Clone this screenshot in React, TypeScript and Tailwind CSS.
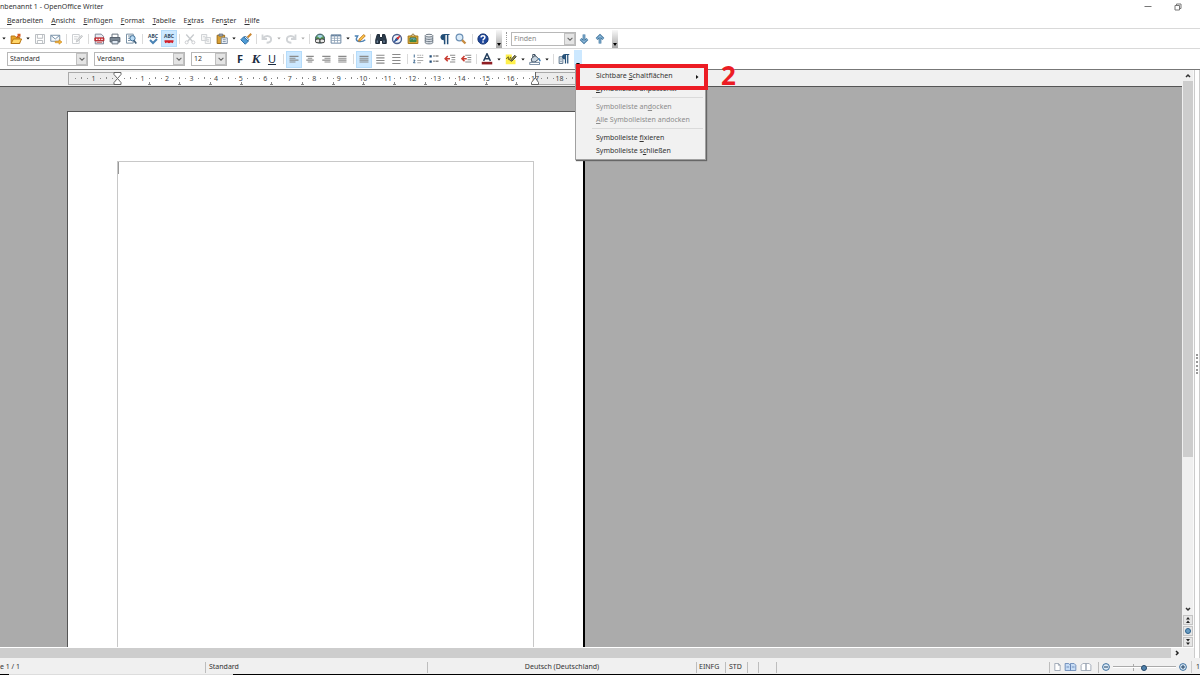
import React from 'react';

interface IconProps {
  children: React.ReactNode;
}

const Icon: React.FC<IconProps> = ({ children }) => (
  <svg viewBox="0 0 16 16" className="w-3 h-3" fill="none" stroke="#444" strokeWidth="1.3" aria-hidden="true">
    {children}
  </svg>
);

interface ToolProps {
  label: string;
  active?: boolean;
  children: React.ReactNode;
}

const Tool: React.FC<ToolProps> = ({ label, active, children }) => (
  <button
    type="button"
    aria-label={label}
    className={
      active
        ? 'flex h-[17px] w-4 shrink-0 items-center justify-center border border-[#b5dcfb] bg-[#cce8ff]'
        : 'flex h-4 w-4 shrink-0 items-center justify-center'
    }
  >
    {children}
  </button>
);

const Arrow = ({ dim }: { dim?: boolean }) => (
  <button type="button" aria-label="Mehr" className="flex h-4 w-2 shrink-0 items-center justify-center">
    <svg viewBox="0 0 4 3" className="h-[3px] w-1" fill={dim ? '#aaa' : '#111'}>
      <path d="M0.300 0.500h3.400L2 2.500z" />
    </svg>
  </button>
);

const Sep = ({ wide }: { wide?: boolean }) => (
  <span className={wide ? 'flex w-[6px] shrink-0 justify-center' : 'flex w-[5px] shrink-0 justify-center'}>
    <span className="h-[10px] w-px bg-[#dadada]" />
  </span>
);

const Chevron = () => (
  <svg viewBox="0 0 10 10" className="h-2 w-2" fill="none" stroke="#666" strokeWidth="1.3">
    <path d="M2 3.5l3 3 3-3" />
  </svg>
);

const Overflow = () => (
  <button
    type="button"
    aria-label="Weitere Schaltflächen"
    className="flex h-[18px] w-[6px] shrink-0 items-end justify-center bg-linear-to-b from-[#f8f8f8] to-[#a8a8a8] pb-[2px]"
  >
    <svg viewBox="0 0 4 3" className="h-[3px] w-1" fill="#000">
      <path d="M0 0h4L2 3z" />
    </svg>
  </button>
);

interface ComboProps {
  label: string;
  value: string;
  width: string;
}

const Combo: React.FC<ComboProps> = ({ label, value, width }) => (
  <label className={`relative flex h-[14px] shrink-0 border border-[#b8b8b8] bg-white ${width}`}>
    <select aria-label={label} className="w-full appearance-none bg-transparent pl-[2px] leading-3 outline-none">
      <option>{value}</option>
    </select>
    <span className="pointer-events-none absolute inset-y-0 right-0 flex w-[11px] items-center justify-center border border-[#c0c0c0] bg-[#e4e4e4]">
      <Chevron />
    </span>
  </label>
);

const Undo = ({ flip }: { flip?: boolean }) => (
  <Icon>
    <path
      d={flip ? 'M14 2v6H8M13.500 7.500C10 2 2 3.500 2.500 9c.5 3 3 4 6 4' : 'M2 2v6h6M2.500 7.500C6 2 14 3.500 13.500 9c-.5 3-3 4-6 4'}
      stroke="#d0d3d6"
      strokeWidth="2.400"
    />
  </Icon>
);

const Lines = ({ d, color = '#8a8a8a' }: { d: string; color?: string }) => (
  <Icon>
    <path d={d} stroke={color} strokeWidth="1.4" />
  </Icon>
);

const SpellCheck = ({ auto }: { auto?: boolean }) => (
  <svg viewBox="0 0 14 14" className="h-[14px] w-[14px]" aria-hidden="true">
    <text x="7" y="6" textAnchor="middle" fontSize="5" fontWeight="700" fill="#34495e">ABC</text>
    {auto ? (
      <path d="M2.500 9h9M3 10.500l2-1 2 1 2-1 2 1" fill="none" stroke="#d3202b" strokeWidth="1.500" />
    ) : (
      <path d="M4 8l3 3 4-4" fill="none" stroke="#4a83b5" strokeWidth="2" />
    )}
  </svg>
);

const menus = [
  ['B', 'earbeiten'],
  ['A', 'nsicht'],
  ['E', 'infügen'],
  ['F', 'ormat'],
  ['T', 'abelle'],
];

const StandardToolbar = () => (
  <div className="flex h-5 items-center border-b border-[#d9d9d9]">
    <Arrow />
    <Tool label="Öffnen">
      <Icon>
        <path d="M1.500 14V4h5l1.500 2h5v8z" fill="#e9a72a" stroke="#b87512" />
        <path d="M1.500 14l3-6h11l-3 6z" fill="#ffd567" stroke="#b87512" />
        <path d="M9 6l4-4m-3 0h3v3" stroke="#d55a20" strokeWidth="2" />
      </Icon>
    </Tool>
    <Arrow />
    <Tool label="Speichern">
      <Icon>
        <path d="M2 2h12v12H2zM4.500 2v5h7V2M4.500 14v-4h7v4" stroke="#b9bdc1" />
      </Icon>
    </Tool>
    <Tool label="E-Mail">
      <Icon>
        <path d="M1 3h12v8H1zM1 3l6 5 6-5" fill="#f5f8fb" stroke="#7790a8" />
        <path d="M7 11h5V9l4 3-4 3v-2H7z" fill="#f4b53c" stroke="#c98515" strokeWidth=".8" />
      </Icon>
    </Tool>
    <Sep />
    <Tool label="Bearbeiten">
      <Icon>
        <path d="M2 2h9v12H2zM4 5h5M4 8h4" stroke="#cccfd2" />
        <path d="M7 12l1-3 6-6 1.500 1.500-6 6z" fill="#ddd" stroke="#c2c5c8" />
      </Icon>
    </Tool>
    <Sep wide />
    <Tool label="PDF">
      <Icon>
        <path d="M3 1.500h8l3 3v10H3z" fill="#e9ebf2" stroke="#7d8595" />
        <path d="M2.500 6.500h12v4h-12z" fill="#d4353a" stroke="#b42a30" />
        <path d="M4 8.500h2m1.500 0h2m1.500 0h2" stroke="#fff" strokeWidth="1.500" />
        <path d="M5 12.500h7" stroke="#c66" strokeWidth="1.200" />
      </Icon>
    </Tool>
    <Tool label="Drucken">
      <Icon>
        <path d="M4 6V1.500h8V6" fill="#fff" stroke="#66717d" />
        <path d="M1.500 6h13v6h-13z" fill="#7c8894" stroke="#56616d" />
        <path d="M4 10h8v4.500H4z" fill="#dfe8f2" stroke="#66717d" />
      </Icon>
    </Tool>
    <Tool label="Seitenansicht">
      <Icon>
        <path d="M2 1.500h9v12H2zM4 4h5M4 7h3M4 10h3" fill="#fff" stroke="#7890a5" />
        <circle cx="10" cy="7" r="3.500" fill="#b9daf3" stroke="#3d6d96" />
        <path d="M12 10l3 4" stroke="#3d5c77" strokeWidth="2.200" />
      </Icon>
    </Tool>
    <Sep wide />
    <Tool label="Rechtschreibung">
      <SpellCheck />
    </Tool>
    <Tool label="Automatische Rechtschreibprüfung" active>
      <SpellCheck auto />
    </Tool>
    <Sep />
    <Tool label="Ausschneiden">
      <Icon>
        <path d="M3 2l8 9M13 2l-8 9" stroke="#c8cbce" strokeWidth="1.800" />
        <circle cx="3.500" cy="12.500" r="2" stroke="#c8cbce" />
        <circle cx="12.500" cy="12.500" r="2" stroke="#c8cbce" />
      </Icon>
    </Tool>
    <Tool label="Kopieren">
      <Icon>
        <path d="M2 2h7v8H2zM7 6h7v8H7zM4 5h3M9 9h3M9 11h3" fill="#f6f6f6" stroke="#d0d3d6" />
      </Icon>
    </Tool>
    <Tool label="Einfügen">
      <Icon>
        <path d="M1.500 3h10v11h-10z" fill="#d9a033" stroke="#9b6b1a" />
        <path d="M4 1.500h5V4H4z" fill="#b8bdc5" stroke="#666f7c" />
        <path d="M7 6.500h8V14H7zM9 9h4M9 11.500h4" fill="#f4f8fc" stroke="#7b8ea5" />
      </Icon>
    </Tool>
    <Arrow />
    <Tool label="Format übertragen">
      <Icon>
        <path d="M15 1l-5 5" stroke="#c98530" strokeWidth="2.500" />
        <path d="M7 4l5 5-2 2-5-5z" fill="#d5e8f7" stroke="#41729a" />
        <path d="M5 5l6 6-4 4-6-6z" fill="#4f9bd5" stroke="#2e6ea3" />
      </Icon>
    </Tool>
    <Sep />
    <Tool label="Rückgängig"><Undo /></Tool>
    <Arrow dim />
    <Tool label="Wiederherstellen"><Undo flip /></Tool>
    <Arrow dim />
    <Sep />
    <Tool label="Hyperlink">
      <Icon>
        <circle cx="8" cy="7.500" r="6" fill="#5e9f5b" stroke="#2e4f64" />
        <path d="M4 4c3-2 5-2 8 0l-4 3z" fill="#a5d3ec" stroke="none" />
        <rect x="2" y="8" width="6" height="5" rx="2" fill="#e8e8e8" stroke="#333" />
        <rect x="8" y="8" width="6" height="5" rx="2" fill="#e8e8e8" stroke="#333" />
      </Icon>
    </Tool>
    <Tool label="Tabelle">
      <Icon>
        <path d="M1.500 2.500h13v11h-13z" fill="#fff" stroke="#6984a0" />
        <path d="M1.500 3.500h13" stroke="#6984a0" strokeWidth="2" />
        <path d="M1.500 7h13M1.500 10h13M6 3v10M10 3v10" stroke="#8ba0b5" strokeWidth="1" />
      </Icon>
    </Tool>
    <Arrow />
    <Tool label="Zeichnen">
      <Icon>
        <path d="M1 4h4L3 8c0 4 8 5 12 1" stroke="#4b80b3" strokeWidth="1.800" />
        <path d="M6 11l1-3 6-6 2 2-6 6z" fill="#ffc848" stroke="#c07a26" />
      </Icon>
    </Tool>
    <Sep />
    <Tool label="Suchen und Ersetzen">
      <Icon>
        <path d="M3 2h3v4h4V2h3l2 7v5h-5v-4H6v4H1V9z" fill="#2b3b4c" stroke="#1d2935" />
        <path d="M3 10v3M12 10v3" stroke="#8aa3bb" />
      </Icon>
    </Tool>
    <Tool label="Navigator">
      <Icon>
        <circle cx="8" cy="8" r="6" fill="#eef4fb" stroke="#4b5f8c" strokeWidth="1.800" />
        <path d="M12 4L9 9 7 7z" fill="#d13438" stroke="#d13438" />
        <path d="M4 12l3-5 2 2z" fill="#31589b" stroke="#31589b" />
      </Icon>
    </Tool>
    <Tool label="Gallery">
      <Icon>
        <path d="M5 4l3-3 3 3" stroke="#8d7028" />
        <path d="M1.500 4h13v10h-13z" fill="#e1ac38" stroke="#a2761c" />
        <path d="M4 6.500h8v5H4z" fill="#74b5dd" stroke="#376f40" />
        <path d="M4 11l3-3 2 2 1.500-1L12 11z" fill="#3f8b45" stroke="#3f8b45" />
      </Icon>
    </Tool>
    <Tool label="Datenquellen">
      <Icon>
        <path d="M3 3.500v9.500c0 2 10 2 10 0V3.500" fill="#d8dee5" stroke="#6b7682" />
        <ellipse cx="8" cy="3.500" rx="5" ry="1.800" fill="#f4f6f8" stroke="#6b7682" />
        <path d="M3 7c0 2 10 2 10 0M3 10c0 2 10 2 10 0" stroke="#6b7682" />
      </Icon>
    </Tool>
    <Tool label="Steuerzeichen">
      <Icon>
        <path d="M14 2H6a3.500 3.500 0 000 7h1V3" fill="#234f78" stroke="#234f78" />
        <path d="M7.500 2v13M11.500 2v13" stroke="#234f78" strokeWidth="2" />
      </Icon>
    </Tool>
    <Tool label="Zoom">
      <Icon>
        <circle cx="6" cy="6" r="4.500" fill="#d9eaf8" stroke="#6a8fb4" strokeWidth="1.600" />
        <path d="M9.500 9.500L14 14" stroke="#c68b40" strokeWidth="3" />
      </Icon>
    </Tool>
    <Sep wide />
    <Tool label="Hilfe">
      <Icon>
        <circle cx="8" cy="8" r="6.800" fill="#1d469b" stroke="#10306f" />
        <path d="M5.500 6C5.500 3 10.500 3 10.500 6c0 2-2.500 1.800-2.500 4M8 11v2" stroke="#fff" strokeWidth="2" />
      </Icon>
    </Tool>
    <span className="w-[5px] shrink-0" />
    <Overflow />
    <span className="mx-1 h-[14px] w-px border-l border-dotted border-[#999]" />
    <div className="relative h-[14px] w-[65px] shrink-0 border border-[#b8b8b8]">
      <input aria-label="Suchtext" placeholder="Finden" className="block h-3 w-full pl-[2px] outline-none placeholder:text-[#888]" />
      <span className="absolute inset-y-0 right-0 flex w-[11px] items-center justify-center border border-[#c0c0c0] bg-[#e4e4e4]">
        <Chevron />
      </span>
    </div>
    <Tool label="Weitersuchen">
      <Icon>
        <path d="M8 2v10M3.500 8L8 12.500 12.500 8" stroke="#3f739c" strokeWidth="3.600" />
        <path d="M8 2v10M3.500 8L8 12.500 12.500 8" stroke="#8fbbdb" strokeWidth="1.400" />
      </Icon>
    </Tool>
    <Tool label="Rückwärts suchen">
      <Icon>
        <path d="M8 14V4M3.500 8L8 3.500 12.500 8" stroke="#3f739c" strokeWidth="3.600" />
        <path d="M8 14V4M3.500 8L8 3.500 12.500 8" stroke="#8fbbdb" strokeWidth="1.400" />
      </Icon>
    </Tool>
    <span className="w-1 shrink-0" />
    <Overflow />
  </div>
);

const FormatToolbar = () => (
  <div className="flex h-5 items-center">
    <div className="flex gap-[6px] pr-[5px] pl-[7px]">
      <Combo label="Vorlage" value="Standard" width="w-[81px]" />
      <Combo label="Schriftart" value="Verdana" width="w-[91px]" />
      <Combo label="Schriftgröße" value="12" width="w-[36px]" />
    </div>
    <Tool label="Fett"><span className="text-[11px] leading-4 font-bold text-[#1a2b40]">F</span></Tool>
    <Tool label="Kursiv"><span className="font-['Liberation_Serif',serif] text-[13px] leading-4 font-bold text-[#1a2b40] italic">K</span></Tool>
    <Tool label="Unterstrichen"><span className="text-[11px] leading-4 text-[#1a2b40] underline">U</span></Tool>
    <Sep wide />
    <Tool label="Linksbündig" active><Lines d="M2 4.500h12M2 7h8M2 9.500h12M2 12h8" /></Tool>
    <Tool label="Zentriert"><Lines d="M3 4.500h10M5 7h6M3 9.500h10M5 12h6" /></Tool>
    <Tool label="Rechtsbündig"><Lines d="M3 4.500h11M6 7h8M3 9.500h11M6 12h8" /></Tool>
    <Tool label="Blocksatz"><Lines d="M3 4.500h11M3 7h11M3 9.500h11M3 12h11" /></Tool>
    <Sep wide />
    <Tool label="Einzeilig" active><Lines d="M2 4.500h12M2 7h12M2 9.500h12M2 12h12" /></Tool>
    <Tool label="Eineinhalbzeilig"><Lines d="M3 3h11M3 6.500h11M3 10h11M3 13.500h11" /></Tool>
    <Tool label="Zweizeilig"><Lines d="M3 2h11M3 6h11M3 10h11M3 14h11" /></Tool>
    <Sep wide />
    <Tool label="Nummerierung">
      <Icon>
        <path d="M3 2v4M2 9.500h2L2 13h2.500" stroke="#38648d" />
        <path d="M7 3h2m1 0h2m1 0h2M7 6h8M7 10h8M7 13h5" stroke="#aaa" />
      </Icon>
    </Tool>
    <Tool label="Aufzählung">
      <Icon>
        <path d="M2 3h3v3H2zM2 10h3v3H2z" fill="#28517a" stroke="none" />
        <path d="M7 4h2m1 0h4M7 11h2m1 0h4" stroke="#888" strokeWidth="2" />
      </Icon>
    </Tool>
    <Tool label="Einzug vermindern">
      <Icon>
        <path d="M8 3h7M10 6h5M10 9h5M8 12h7" stroke="#888" />
        <path d="M8 7.500H2M5 4L1.500 7.500 5 11" stroke="#c83d32" strokeWidth="2" />
      </Icon>
    </Tool>
    <Tool label="Einzug erhöhen">
      <Icon>
        <path d="M7 3h8M10 6h5M10 9h5M7 12h8" stroke="#888" />
        <path d="M9 7.500H3M6 4L2.500 7.500 6 11" stroke="#c83d32" strokeWidth="2" />
      </Icon>
    </Tool>
    <Sep />
    <Tool label="Zeichenfarbe">
      <Icon>
        <path d="M3.500 10.500L8 1l4.500 9.500M5.500 7.500h5" stroke="#243f5e" strokeWidth="2" />
        <path d="M1 13.500h14" stroke="#8f1c22" strokeWidth="3.500" />
      </Icon>
    </Tool>
    <Arrow />
    <Tool label="Hervorheben">
      <Icon>
        <path d="M1 9h13v6H1zM1 2h8v7H1z" fill="#fff04a" stroke="none" />
        <path d="M2 8c2-4 3-4 3 0s2-1 3-3" stroke="#585018" />
        <path d="M7 10l6-7 2 2-6 6z" fill="#8b8540" stroke="#444" />
      </Icon>
    </Tool>
    <Arrow />
    <Tool label="Hintergrundfarbe">
      <Icon>
        <path d="M3 8l5-5 5 5-5 4H4z" fill="#c9d5e0" stroke="#3d4e60" />
        <path d="M5 6V2h3v3" stroke="#3d4e60" />
        <path d="M13 7l2 4" stroke="#3c7db5" strokeWidth="2" />
        <path d="M1 12.500h13v3H1z" fill="#fff" stroke="#6b8299" />
      </Icon>
    </Tool>
    <Arrow />
    <Sep />
    <Tool label="Absatz">
      <Icon>
        <path d="M1.500 5h5v9h-5zM3 8h2M3 11h2" fill="#e8eef4" stroke="#5e768e" />
        <path d="M15 2H9a3 3 0 000 6V3" fill="#234f78" stroke="#234f78" />
        <path d="M10 2v12M13 2v12" stroke="#234f78" strokeWidth="1.600" />
      </Icon>
    </Tool>
    <div className="relative ml-[2px]">
      <button type="button" aria-label="Weitere Schaltflächen" className="flex h-[18px] w-2 items-end justify-center bg-[#cce8ff] pb-[2px]">
        <svg viewBox="0 0 4 3" className="h-[3px] w-1" fill="#000">
          <path d="M0 0h4L2 3z" />
        </svg>
      </button>
      <ContextMenu />
    </div>
  </div>
);

const ContextMenu = () => (
  <div className="absolute top-[14px] left-px z-10 w-[131px] border border-[#a0a0a0] bg-[#f1f1f1] pt-1 pb-[2px] whitespace-nowrap shadow-[1px_1px_1px_#666]">
    <MenuItem>Sichtbare <u>S</u>chaltflächen</MenuItem>
    <MenuItem><u>S</u>ymbolleiste anpassen...</MenuItem>
    <hr className="my-[2px] mr-[2px] ml-4 border-[#dadada]" />
    <MenuItem disabled>Symbolleiste an<u>d</u>ocken</MenuItem>
    <MenuItem disabled><u>A</u>lle Symbolleisten andocken</MenuItem>
    <hr className="my-[2px] mr-[2px] ml-4 border-[#dadada]" />
    <MenuItem>Symbolleiste <u>f</u>ixieren</MenuItem>
    <MenuItem>Symbolleiste s<u>c</u>hließen</MenuItem>
    <svg viewBox="0 0 3 4" className="absolute top-[10px] right-[6px] h-1 w-[3px]" fill="#111">
      <path d="M0 0l2.500 2L0 4z" />
    </svg>
    <div className="absolute -top-px left-0 h-[26px] w-[132px] border-4 border-[#ec1c24]" />
    <span className="absolute -top-[2px] left-[145px] text-[26px] leading-6 font-bold text-[#ec1c24]">2</span>
  </div>
);

const MenuItem = ({ disabled, children }: { disabled?: boolean; children: React.ReactNode }) => (
  <button
    type="button"
    disabled={disabled}
    className="block h-[13px] w-full pl-5 text-left leading-3 disabled:text-[#8c8c8c]"
  >
    {children}
  </button>
);

const CM = 24.53;
const numbers = Array.from({ length: 18 }, (_, i) => i + 1);

// origin of the scale is at x=50, the left page margin
const Ruler = () => (
  <div className="h-[17px] shrink-0 border-b border-[#555] bg-[#f0f0f0] pt-[2px] pl-[68px]">
    <svg className="block" width="517" height="13" aria-label="Lineal">
      <rect x="0.5" y="0.5" width="516" height="12" fill="#ececec" stroke="#aaa" />
      <rect x="50" y="0" width="417" height="13" fill="#fff" />
      <g fontSize="7" fill="#444" textAnchor="middle">
        <text x={50 - CM} y="9">1</text>
        {numbers.map((n) => (
          <text key={n} x={50 + n * CM} y="9">{n}</text>
        ))}
      </g>
      {Array.from({ length: 21 }, (_, i) => i - 2).map((n) =>
        [0.25, 0.5, 0.75].map((f) => (
          <rect
            key={n + f}
            x={Math.round(50 + (n + f) * CM)}
            y={f === 0.5 ? 5 : 6}
            width="1"
            height={f === 0.5 ? 2 : 1}
            fill="#888"
          />
        ))
      )}
      {Array.from({ length: 13 }, (_, i) => Math.round(50 + (i + 1) * 30.65)).map((x) => (
        <path key={x} d={`M${x - 1} 13h3v-1h-1v-2h-1v2h-1z`} fill="#888" />
      ))}
      <path d="M46 0.5h7v2l-3.500 4 3.500 4v2h-7v-2l3.500-4-3.500-4z" fill="#fff" stroke="#666" />
      <path d="M467.500 0v6l3 4.500v2h-7v-2l3.500-4.500" fill="#fff" stroke="#666" />
    </svg>
  </div>
);

const ScrollNav = ({ label, d }: { label: string; d: string }) => (
  <button type="button" aria-label={label} className="flex h-[10px] w-[10px] items-center justify-center border border-[#c4c4c4] bg-[#e6e6e6]">
    <svg viewBox="0 0 8 8" className="h-2 w-2" fill="#222">
      <path d={d} />
    </svg>
  </button>
);

const VerticalScrollbar = () => (
  <div className="flex w-3 shrink-0 flex-col items-center border-r border-[#fafafa] bg-[#f0f0f0]">
    <button type="button" aria-label="Nach oben" className="flex h-[11px] w-full items-center justify-center">
      <svg viewBox="0 0 8 8" className="h-2 w-2" fill="none" stroke="#333" strokeWidth="1.500">
        <path d="M2 5l2-2 2 2" />
      </svg>
    </button>
    <div className="flex w-full grow flex-col items-center">
      <div className="h-[72%] w-[10px] bg-[#cdcdcd]" />
    </div>
    <button type="button" aria-label="Nach unten" className="flex h-3 w-full items-center justify-center">
      <svg viewBox="0 0 8 8" className="h-2 w-2" fill="none" stroke="#333" strokeWidth="1.500">
        <path d="M2 3l2 2 2-2" />
      </svg>
    </button>
    <div className="flex flex-col gap-px">
      <ScrollNav label="Vorherige Seite" d="M2 3.500l2-2.500 2 2.500zM2 7l2-2.500 2 2.500z" />
      <button type="button" aria-label="Navigation" className="flex h-[10px] w-[10px] items-center justify-center border border-[#c4c4c4] bg-[#e6e6e6]">
        <span className="h-[6px] w-[6px] rounded-full border border-[#2c618c] bg-[#6a9cc2]" />
      </button>
      <ScrollNav label="Nächste Seite" d="M2 1l2 2.500L6 1zM2 4.500l2 2.500 2-2.500z" />
    </div>
  </div>
);

const StatusSep = () => <span className="h-[11px] w-px shrink-0 bg-[#bdbdbd]" />;

const StatusBar = () => (
  <footer className="flex h-4 shrink-0 items-center bg-[#f0f0f0] pt-[2px]">
    <span className="w-[205px] shrink-0">e 1 / 1</span>
    <StatusSep />
    <span className="w-[221px] shrink-0 pl-[3px]">Standard</span>
    <StatusSep />
    <span className="w-[268px] shrink-0 text-center">Deutsch (Deutschland)</span>
    <StatusSep />
    <span className="w-7 shrink-0 pl-[2px]">EINFG</span>
    <StatusSep />
    <span className="w-[21px] shrink-0 pl-[3px]">STD</span>
    <StatusSep />
    <span className="w-[10px]" />
    <StatusSep />
    <span className="w-[17px]" />
    <StatusSep />
    <div className="ml-auto flex items-center">
      <StatusSep />
      <div className="flex items-center gap-[3px] pr-[6px] pl-1">
        <button type="button" aria-label="Einzelne Seite">
          <svg viewBox="0 0 7 9" className="h-2 w-[7px]" fill="#fff" stroke="#98a3b1">
            <path d="M.5.5h4l2 2v6h-6zM4.500.5v2h2" />
          </svg>
        </button>
        <button type="button" aria-label="Mehrere Seiten">
          <svg viewBox="0 0 13 9" className="h-2 w-[13px]" fill="#c6dcf5" stroke="#6585b5">
            <path d="M.5.5h4l2 2v6h-6zM6.500.5h4l2 2v6h-6zM2 4.500h3M8 4.500h3" />
          </svg>
        </button>
        <button type="button" aria-label="Buchansicht">
          <svg viewBox="0 0 12 9" className="h-2 w-3" fill="#fff" stroke="#98a3b1">
            <path d="M.5 2.500l2-2H6v8H.5zM6 .5h3.500l2 2v6H6z" />
          </svg>
        </button>
      </div>
      <StatusSep />
      <button type="button" aria-label="Verkleinern" className="ml-[3px]">
        <svg viewBox="0 0 8 8" className="h-2 w-2" fill="#dcebf7" stroke="#3e6f9d">
          <circle cx="4" cy="4" r="3.400" />
          <path d="M2 4h4" stroke="#1c3f63" />
        </svg>
      </button>
      <div className="relative mx-[3px] flex w-[63px] items-center">
        <span className="absolute left-5 h-[7px] w-px bg-[#aaa]" />
        <input
          type="range"
          aria-label="Zoom"
          defaultValue={50}
          className="relative h-[2px] w-full appearance-none border-t border-[#aaa] bg-white [&::-webkit-slider-thumb]:h-[6px] [&::-webkit-slider-thumb]:w-[6px] [&::-webkit-slider-thumb]:appearance-none [&::-webkit-slider-thumb]:rounded-full [&::-webkit-slider-thumb]:border [&::-webkit-slider-thumb]:border-[#25476a] [&::-webkit-slider-thumb]:bg-[#4f81ab]"
        />
      </div>
      <button type="button" aria-label="Vergrößern">
        <svg viewBox="0 0 8 8" className="h-2 w-2" fill="#dcebf7" stroke="#3e6f9d">
          <circle cx="4" cy="4" r="3.400" />
          <path d="M2 4h4M4 2v4" stroke="#1c3f63" />
        </svg>
      </button>
      <span className="mx-1 h-3 w-px bg-[#ccc]" />
      <span className="leading-3">1</span>
    </div>
  </footer>
);

const App: React.FC = () => {
  return (
    <div className="flex h-screen flex-col overflow-hidden bg-white font-['Noto_Sans',sans-serif] text-[7px] leading-3 text-[#333]">
      <header className="shrink-0">
        <div className="flex h-[14px] items-center justify-between pr-[18px]">
          <h1>nbenannt 1 - OpenOffice Writer</h1>
          <div className="flex items-center gap-[22px]">
            <button type="button" aria-label="Minimieren">
              <svg viewBox="0 0 8 8" className="h-2 w-2" stroke="#777">
                <path d="M0.500 3.500h7" />
              </svg>
            </button>
            <button type="button" aria-label="Wiederherstellen">
              <svg viewBox="0 0 8 8" className="h-2 w-2" fill="none" stroke="#777">
                <path d="M1 2.500h4.500v4.500H1zM2.500 2.500V1H7v4.500H5.500" />
              </svg>
            </button>
          </div>
        </div>
        <nav className="flex h-[14px] items-center gap-2 pl-[7px]">
          {menus.map(([key, rest]) => (
            <button type="button" key={rest}><u>{key}</u>{rest}</button>
          ))}
          <button type="button">E<u>x</u>tras</button>
          <button type="button">Fen<u>s</u>ter</button>
          <button type="button"><u>H</u>ilfe</button>
        </nav>
        <div className="border-t border-[#d9d9d9]">
          <StandardToolbar />
          <FormatToolbar />
        </div>
      </header>

      <div className="flex min-h-0 grow border-t border-[#777]">
        <div className="flex min-w-0 grow flex-col">
          <div className="flex min-h-0 grow">
            <div className="flex min-w-0 grow flex-col">
              <Ruler />
              <main className="flex min-h-0 grow overflow-hidden bg-[#ababab] pt-6 pl-[67px]">
                <div className="w-[518px] border-t border-r-2 border-l border-t-[#555] border-r-black border-l-[#555] bg-white px-[49px] pt-[49px]">
                  <div className="h-full border border-b-0 border-[#c8c8c8]">
                    <div className="h-3 w-px bg-[#999]" />
                  </div>
                </div>
              </main>
            </div>
            <VerticalScrollbar />
          </div>
          <div className="flex h-[11px] shrink-0 items-center border-t border-white bg-[#f0f0f0]">
            <div className="h-[10px] grow bg-[#cdcdcd]" />
            <button type="button" aria-label="Nach rechts" className="mr-3 flex w-[11px] justify-center">
              <svg viewBox="0 0 8 8" className="h-2 w-2" fill="none" stroke="#222" strokeWidth="1.500">
                <path d="M3 2l2 2-2 2" />
              </svg>
            </button>
          </div>
        </div>
        <aside className="flex w-[6px] shrink-0 items-center justify-end border-l border-[#ccc] bg-white">
          <span className="h-5 border-l-2 border-dotted border-[#999]" />
          <span className="ml-px h-full w-px bg-[#ccc]" />
        </aside>
      </div>
      <StatusBar />
      <div className="flex h-px shrink-0 bg-black pl-[9px]">
        <span className="w-56 bg-[#ddd]" />
      </div>
    </div>
  );
};

export default App;
